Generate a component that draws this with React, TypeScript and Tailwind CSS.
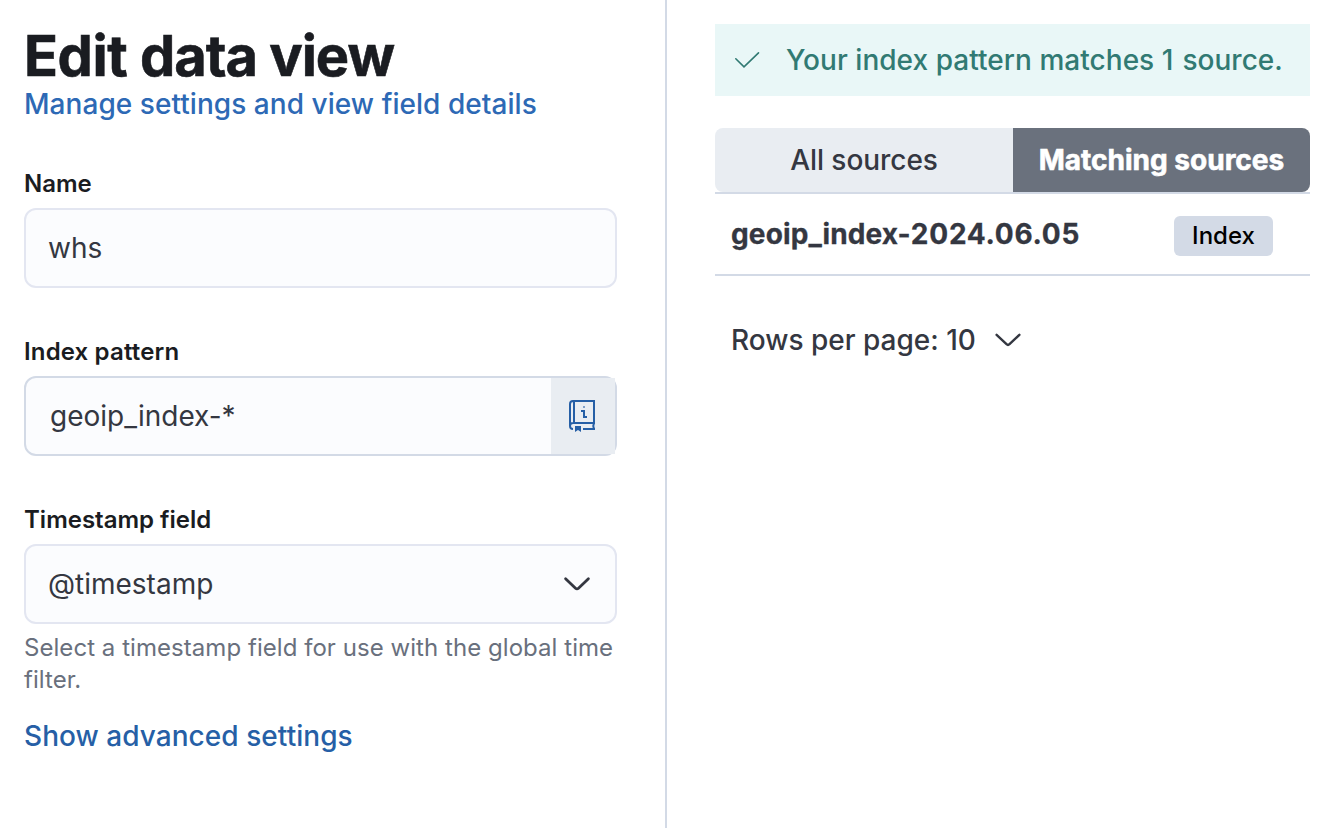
import React from 'react';

function Chevron({ strokeWidth }: { strokeWidth: number }) {
  return (
    <svg width="28" height="16" viewBox="0 0 28 16" fill="none" stroke="#343741" strokeWidth={strokeWidth} strokeLinecap="round" strokeLinejoin="round">
      <path d="M2.6 2.8 L12.5 12.2 Q14 13.6 15.5 12.2 L25.4 2.8" />
    </svg>
  );
}

function DocumentationIcon() {
  return (
    <svg width="32" height="32" viewBox="0 0 32 32" fill="none" stroke="#265fa6" strokeWidth="2">
      <path d="M27 1H6Q3 1 3 4V26Q3 29 6 29M3 26Q3 23 6 23H27M7 1V23M27 0V24" />
      <path d="M27 23Q25.5 26 27 29M16 29H28" />
      <path d="M8 26h6v6l-3-2-3 2z" fill="#265fa6" stroke="none" />
      <path d="M14 11H17V17H20" />
      <path d="M16 7h2" strokeOpacity="0.55" />
    </svg>
  );
}

function Label({ children }: { children: React.ReactNode }) {
  return <div className="h-10 text-[24px] leading-[32px] font-semibold text-[#1a1c21]">{children}</div>;
}

export default function App() {
  return (
    <div className="flex h-[828px] w-[1318px] overflow-hidden bg-white font-['Inter',sans-serif] text-[28px] text-[#343741]">
      <section className="w-[667px] shrink-0 border-r-2 border-[#d3dae6] pl-6 pr-12">
        <h1 className="mt-6 h-16 whitespace-nowrap text-[56px] leading-[64px] font-bold tracking-[-1.05px] text-[#1a1c21] [-webkit-text-stroke:0.6px_#1a1c21]">
          <span className="tracking-[-0.44px]">Edit </span>data view
        </h1>
        <div className="h-8 whitespace-nowrap leading-[32px] font-medium tracking-[0.05px] text-[#2d69b5]">Manage settings and view field details</div>
        <div className="mt-12">
          <Label>Name</Label>
          <div className="flex h-20 w-[593px] items-center rounded-xl border-2 border-[#e3e6f1] bg-[#fbfcfe] pl-[22px]">whs</div>
        </div>
        <div className="mt-12">
          <Label><span className="tracking-[0.15px]">Index pattern</span></Label>
          <div className="flex h-20 w-[593px] rounded-xl border-2 border-[#d3dae6] bg-[#fbfcfe]">
            <div className="flex flex-1 items-center pl-6">geoip_index-*</div>
            <div className="flex w-16 items-center justify-center bg-[#e9edf2]">
              <DocumentationIcon />
            </div>
          </div>
        </div>
        <div className="mt-12">
          <Label>Timestamp field</Label>
          <div className="flex h-20 w-[593px] items-center justify-between rounded-xl border-2 border-[#e3e6f1] bg-[#fbfcfe] pl-[22px] pr-6">
            @timestamp
            <Chevron strokeWidth={2.8} />
          </div>
        </div>
        <p className="mt-2 w-[593px] text-[24px] leading-[32px] tracking-[0.05px] text-[#69707d]">Select a timestamp field for use with the global time filter.</p>
        <div className="mt-6 leading-[32px] font-medium tracking-[0.05px] text-[#265fa6]">Show advanced settings</div>
      </section>
      <main className="ml-12 w-[595px] pt-6">
        <div className="flex h-[72px] items-center whitespace-nowrap bg-[#e9f7f7] pl-4 font-medium tracking-[0.04px] text-[#317a73]">
          <svg className="mr-[23px]" width="32" height="32" viewBox="0 0 32 32" fill="none" stroke="#317a73" strokeWidth="1.6" strokeLinecap="round">
            <path d="M4.8 14.8L13 22.8L27.5 8.8" />
          </svg>
          <span>Your index pattern matches <span className="tracking-[1.5px]">1</span> source.</span>
        </div>
        <div className="mt-8 flex h-16 overflow-hidden rounded-lg">
          <div className="flex w-[298px] items-center justify-center bg-[#e9edf2] font-medium tracking-[-0.05px]">All sources</div>
          <div className="flex flex-1 items-center justify-center bg-[#6a717d] font-bold text-white [-webkit-text-stroke:0.6px_white]">Matching sources</div>
        </div>
        <div className="flex h-[84px] justify-between border-y-2 border-[#d3dae6] pl-4 pr-[37px]">
          <div className="pt-[22px] leading-[36px] font-bold tracking-[0.15px] [-webkit-text-stroke:0.3px_#343741]">
            geoip_index-<span className="tracking-[0.75px]">2024.06.05</span>
          </div>
          <div className="mt-[22px] flex h-10 w-[99px] items-center justify-center rounded-md bg-[#d3dae6] text-[24px] font-medium text-black">Index</div>
        </div>
        <div className="mt-[46px] flex h-9 items-center gap-[18px] pl-4 font-medium">Rows per page: 10 <Chevron strokeWidth={2.4} /></div>
      </main>
    </div>
  );
}
